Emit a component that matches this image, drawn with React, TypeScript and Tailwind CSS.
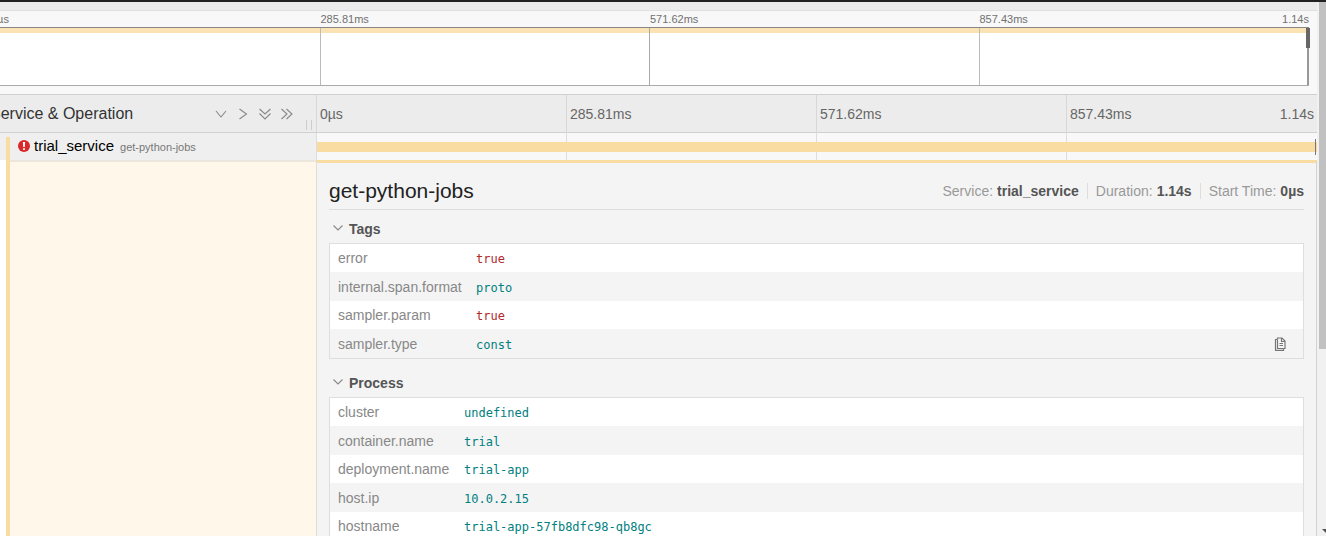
import React from "react";

type Tag = { name: string; value: string; kind?: "bool" };

const tags: Tag[] = [
  { name: "error", value: "true", kind: "bool" },
  { name: "internal.span.format", value: "proto" },
  { name: "sampler.param", value: "true", kind: "bool" },
  { name: "sampler.type", value: "const" },
];

const processTags: Tag[] = [
  { name: "cluster", value: "undefined" },
  { name: "container.name", value: "trial" },
  { name: "deployment.name", value: "trial-app" },
  { name: "host.ip", value: "10.0.2.15" },
  { name: "hostname", value: "trial-app-57fb8dfc98-qb8gc" },
];

function Glyph({ paths, size = 14 }: { paths: string[]; size?: number }) {
  return (
    <svg width={size} height={size} viewBox="0 0 14 14" fill="none" stroke="currentColor" strokeWidth="1.1" aria-hidden="true">
      {paths.map((d) => (
        <path key={d} d={d} />
      ))}
    </svg>
  );
}

const controls = [
  { label: "Expand +1", paths: ["M2 4l5 6 5-6"] },
  { label: "Collapse +1", paths: ["M3.500 2l7 5-7 5"] },
  { label: "Expand all", paths: ["M1.500 2l5.500 5 5.500-5", "M1.500 6.500l5.500 5.500 5.500-5.500"] },
  { label: "Collapse all", paths: ["M1.500 2l5.500 5-5.500 5", "M6.500 2l5.500 5-5.500 5"] },
];

function CopyIcon() {
  return (
    <svg width="14" height="14" viewBox="0 0 14 14" fill="none" stroke="currentColor" strokeWidth="1.2" aria-hidden="true">
      <path d="M4.500 2.500v-1.500h4.500l3 3v7.500h-1.500" />
      <path d="M8.500 1v3.500h3.500" />
      <path d="M4 2.500h-1.500v10.800h8v-1.800" />
      <path d="M4.500 2.500v9h6M6.500 6.500h3.500M6.500 8.500h3.500" />
    </svg>
  );
}

function Section({ title, rows, keyWidth, copy }: { title: string; rows: Tag[]; keyWidth: string; copy?: boolean }) {
  return (
    <section>
      <h3>
        <button type="button" className="flex h-[33px] w-full items-center gap-1 pl-0.5 pt-1 text-sm font-bold text-[#555]">
          <span className="pb-0.5 text-[#888]">
            <Glyph paths={["M2.500 4.500l4.500 4.500 4.500-4.500"]} />
          </span>
          {title}
        </button>
      </h3>
      <div className="border border-[#dedede] bg-white">
        <table className="w-full border-collapse text-sm leading-5">
          <tbody>
            {rows.map((r, i) => (
              <tr key={r.name} className="h-7 even:h-[29px] even:bg-[#f4f4f4]">
                <th scope="row" className={`${keyWidth} p-0 pl-2 text-left font-normal text-[#888]`}>
                  {r.name}
                </th>
                <td className="p-0">
                  <div className="flex items-center justify-between pr-4">
                    <code
                      className={`pt-0.5 font-['DejaVu_Sans_Mono',monospace] text-xs leading-5 ${
                        r.kind === "bool" ? "text-[#b02a2a]" : "text-[#008080]"
                      }`}
                    >
                      {r.value}
                    </code>
                    {copy && i === rows.length - 1 && (
                      <button type="button" aria-label="Copy" className="text-[#777]">
                        <CopyIcon />
                      </button>
                    )}
                  </div>
                </td>
              </tr>
            ))}
          </tbody>
        </table>
      </div>
    </section>
  );
}

function Minimap() {
  return (
    <div className="shrink-0 overflow-hidden pr-2">
      <div className="-ml-[9px]">
        <div className="grid h-4 grid-cols-4 text-[11px] leading-4 text-[#717171]">
          <span>0µs</span>
          <span>285.81ms</span>
          <span>571.62ms</span>
          <span className="flex justify-between">
            <span>857.43ms</span>
            <span>1.14s</span>
          </span>
        </div>
        <div className="relative border-y border-t-[#888] border-b-[#aaa] bg-white">
          <div className="h-[5px] bg-[#fae2b2]" />
          <div className="h-[52px]" />
          <div className="absolute inset-0 grid grid-cols-4">
            <span className="border-r border-[#bbb]" />
            <span className="border-r border-[#aaa]" />
            <span className="border-r border-[#bbb]" />
            <span className="border-r-2 border-[#999]" />
          </div>
          <div className="absolute -right-px top-0 h-5 w-1 bg-[#666]" />
        </div>
      </div>
    </div>
  );
}

function TimelineHeader() {
  return (
    <div className="flex h-[39px] shrink-0 border-y border-[#d0d0d0] bg-[#ececec]">
      <div className="flex w-[317px] shrink-0 items-center overflow-hidden border-r border-[#d8d8d8]">
        <h2 className="-ml-2.5 flex-1 whitespace-nowrap text-base text-[#333]">Service &amp; Operation</h2>
        <div className="flex gap-2 text-[#888]">
          {controls.map((c) => (
            <button key={c.label} type="button" aria-label={c.label}>
              <Glyph paths={c.paths} />
            </button>
          ))}
        </div>
        <div className="mb-0.5 ml-3 mr-1 flex h-2.5 w-[6px] justify-between self-end border-x border-[#ccc]" />
      </div>
      <div className="grid flex-1 grid-cols-4 text-sm leading-[38px] text-[#666]">
        <span className="border-r border-[#d8d8d8] pl-[3px]">0µs</span>
        <span className="border-r border-[#d8d8d8] pl-[3px]">285.81ms</span>
        <span className="border-r border-[#d8d8d8] pl-[3px]">571.62ms</span>
        <span className="flex justify-between px-[3px]">
          <span>857.43ms</span>
          <span>1.14s</span>
        </span>
      </div>
    </div>
  );
}

function SpanRow() {
  return (
    <div className="flex h-[27px] shrink-0">
      <div className="flex w-[317px] shrink-0 border-r border-[#ddd] bg-[#efefef]">
        <div className="ml-1.5 mt-1 w-1 bg-[#f8dca1]" />
        <div className="flex items-center gap-1.5 pb-0.5 pl-2">
          <span className="flex items-center gap-1 text-[15px] leading-5 text-black">
            <svg width="12" height="12" viewBox="0 0 12 12" aria-hidden="true">
              <circle cx="6" cy="6" r="6" fill="#db2828" />
              <path d="M4.900 2h2.200L6.800 7H5.200z" fill="#fff" />
              <circle cx="6" cy="9" r="1.100" fill="#fff" />
            </svg>
            trial_service
          </span>
          <small className="pt-0.5 text-[11px] leading-5 text-[#777]">get-python-jobs</small>
        </div>
      </div>
      <div className="relative flex-1 bg-[#f8f8f8]">
        <div className="grid h-full grid-cols-4">
          <span className="border-r border-[#ddd]" />
          <span className="border-r border-[#ddd]" />
          <span className="border-r border-[#ddd]" />
          <span />
        </div>
        <div className="absolute inset-x-0 top-[9px] h-2.5 bg-[#f8dca1]" />
        <div className="absolute right-px top-1.5 h-4 w-px bg-[#777]" />
      </div>
    </div>
  );
}

function SpanDetail() {
  const facts = [
    ["Service:", "trial_service"],
    ["Duration:", "1.14s"],
    ["Start Time:", "0µs"],
  ];
  return (
    <div className="flex flex-1">
      <div className="flex w-[317px] shrink-0 border-r border-[#ddd] bg-white">
        <div className="ml-1.5 w-1 bg-[#f8dca1]" />
        <div className="flex-1 border-t-2 border-[#ebe7df] bg-[#fff7e9]" />
      </div>
      <div className="min-w-0 flex-1 border-r border-t-[3px] border-r-[#d3d3d3] border-t-[#f8dca1] bg-[#f4f4f4] pl-3 pr-3">
        <header className="flex h-[47px] items-center justify-between border-b border-[#ddd] pt-2.5">
          <h2 className="text-[21px] leading-7 text-[#222]">get-python-jobs</h2>
          <dl className="flex text-sm leading-4">
            {facts.map(([k, v]) => (
              <div key={k} className="flex gap-1 border-r border-[#ddd] px-2 last:border-r-0 last:pr-0">
                <dt className="text-[#999]">{k}</dt>
                <dd className="font-bold text-[#555]">{v}</dd>
              </div>
            ))}
          </dl>
        </header>
        <Section title="Tags" rows={tags} keyWidth="w-[146px]" copy />
        <div className="h-[5px]" />
        <Section title="Process" rows={processTags} keyWidth="w-[134px]" />
      </div>
    </div>
  );
}

export default function App() {
  return (
    <div className="flex h-screen overflow-hidden bg-[#f8f8f8] font-['Liberation_Sans',Arial,sans-serif]">
      <main className="flex min-w-0 flex-1 flex-col">
        <div className="h-[11px] shrink-0 border-b border-t-2 border-b-[#e0e0e0] border-t-[#222] bg-[#ececec]" />
        <Minimap />
        <div className="h-2 shrink-0" />
        <TimelineHeader />
        <SpanRow />
        <SpanDetail />
      </main>
      <div className="flex w-[9px] shrink-0 flex-col border-t-2 border-[#222] bg-[#f1f1f1] pl-0.5">
        <div className="h-[65%] bg-[#c1c1c1]" />
        <svg className="mb-0.5 mt-auto self-end" width="4" height="5" viewBox="0 0 4 5" aria-hidden="true">
          <path d="M0 0h4v4z" fill="#505050" />
        </svg>
      </div>
    </div>
  );
}
